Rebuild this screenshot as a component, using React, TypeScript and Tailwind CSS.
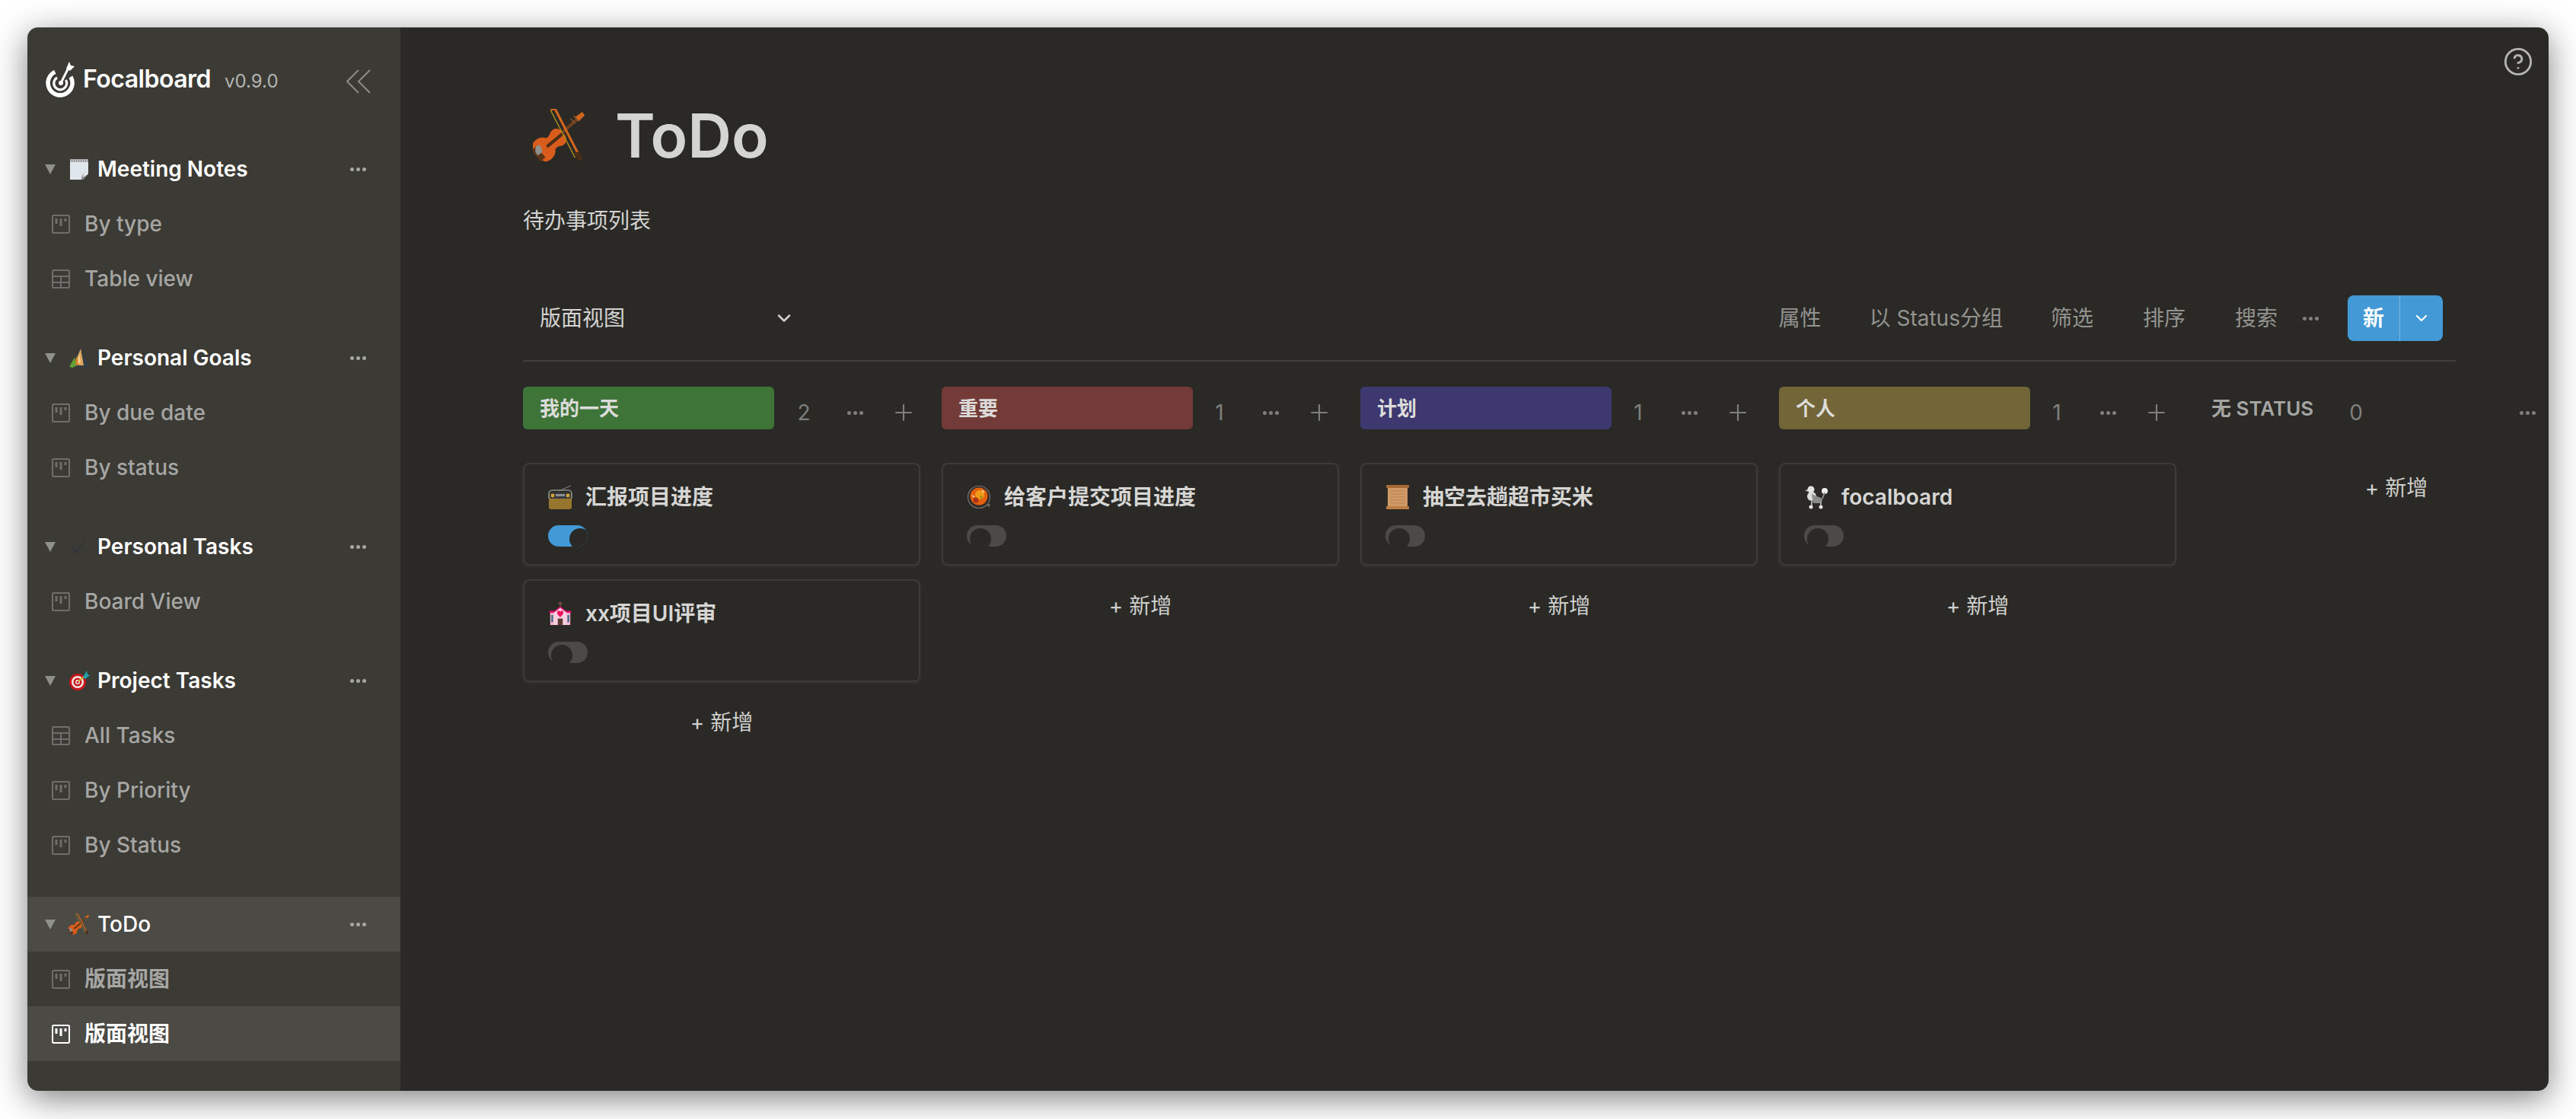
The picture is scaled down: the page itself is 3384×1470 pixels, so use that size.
import React from 'react'
import { ChevronDown, CircleHelp, Plus } from 'lucide-react'

const FONT = 'font-[Inter,"Noto_Sans_CJK_SC",sans-serif]'

// --- emoji drawings (no colour emoji font in the sandbox) ---

const Violin = ({ size }: { size: number }) => (
    <svg width={size} height={size} viewBox="0 0 70 72">
        <path d="M25 44 L60 13" stroke="#6b4020" strokeWidth="4.5" />
        <path d="M56 11 L66 4 L69 9 L61 17Z" fill="#d2651f" />
        <path d="M50 13 L56 20 M54 9 L60 16" stroke="#8a5528" strokeWidth="1.5" />
        <g transform="translate(23 47) rotate(50) scale(1.08)">
            <path d="M0 -21 C10 -21 13 -15 11 -9 C9 -6 8 -3 9 0 C15 3 17 12 14 18 C10 25 -10 25 -14 18 C-17 12 -15 3 -9 0 C-8 -3 -9 -6 -11 -9 C-13 -15 -10 -21 0 -21Z" fill="#d85c1c" />
            <path d="M-2 -21 H2 V6 H-2Z" fill="#4a2c17" />
            <path d="M-9 16 H9 V24 H-9Z" fill="#5a3418" />
        </g>
        <path d="M4 50 C1 54 2 60 6 63 L12 58 L9 49Z" fill="#8f8f8b" />
        <path d="M23 1 L29 0 L63 66" stroke="#d2651f" strokeWidth="3.2" fill="none" />
        <path d="M23 2 L56 66" stroke="#a88a1e" strokeWidth="1.5" fill="none" />
        <path d="M55 60 L62 57 L66 70 L60 70Z" fill="#4a2c17" />
    </svg>
)

const Notepad = ({ size }: { size: number }) => (
    <svg width={size} height={size} viewBox="0 0 28 28">
        <path d="M2 3 H26 V20 L19 28 H2Z" fill="#dfe7ec" />
        <rect x="2" y="1" width="24" height="4" fill="#8f9093" />
        <path d="M3 1 V5 M6 1 V5 M9 1 V5 M12 1 V5 M15 1 V5 M18 1 V5 M21 1 V5 M24 1 V5" stroke="#e8e8e8" strokeWidth="1" />
        <path d="M26 18 C22 18 17 21 17 28 H19 L26 21Z" fill="#85868a" />
        <path d="M25 18 C21 19 19 22 19 25 C21 23 24 22 26 20Z" fill="#f5f5f5" />
    </svg>
)

const Mountain = ({ size }: { size: number }) => (
    <svg width={size} height={size} viewBox="0 0 28 28">
        <path d="M16 2 L27 26 H2Z" fill="#2f3f4a" />
        <path d="M16 2 L20 24 H7Z" fill="#e0a45a" />
        <path d="M11 12 L14 24 H6Z" fill="#c9802e" />
        <path d="M1 26 L8 13 L10 25 L5 27Z" fill="#5fa033" />
        <path d="M14 8 L16 20 L12 22Z" fill="#f2d08e" />
    </svg>
)

const Check = ({ size }: { size: number }) => (
    <svg width={size} height={size} viewBox="0 0 28 28">
        <path d="M3 12 C5 17 8 21 11 24 C15 18 21 8 25 1 C20 8 14 15 11 19 C9 17 6 14 3 12Z" fill="#33343a" />
    </svg>
)

const Dart = ({ size }: { size: number }) => (
    <svg width={size} height={size} viewBox="0 0 28 28">
        <circle cx="12" cy="16" r="11" fill="#c9171e" />
        <circle cx="12" cy="16" r="8" fill="#f3e9e4" />
        <circle cx="12" cy="16" r="5.5" fill="#c9171e" />
        <circle cx="12" cy="16" r="3" fill="#f3e9e4" />
        <circle cx="12" cy="16" r="1.5" fill="#c9171e" />
        <path d="M13 15 L24 6" stroke="#d9a520" strokeWidth="2" />
        <path d="M19 10 L24 1 L25 6 L28 7 L22 12Z" fill="#1ea3a8" />
    </svg>
)

const Radio = ({ size }: { size: number }) => (
    <svg width={size} height={size} viewBox="0 0 32 32">
        <path d="M14 8 L30 1" stroke="#7a7a76" strokeWidth="1.2" />
        <rect x="1" y="10" width="30" height="22" rx="3" fill="#96752f" />
        <path d="M1 18 V11 C1 8 4 7 6 7 H26 C28 7 31 8 31 11 V18" fill="none" stroke="#8c8c88" strokeWidth="1.5" />
        <rect x="2" y="10" width="28" height="8" rx="2" fill="#37393d" />
        <circle cx="6" cy="14" r="2.4" fill="#d6a735" />
        <circle cx="26" cy="14" r="2.4" fill="#d6a735" />
        <rect x="10" y="12" width="12" height="3" fill="#8b8f94" />
    </svg>
)

const Curry = ({ size }: { size: number }) => (
    <svg width={size} height={size} viewBox="0 0 32 32">
        <path d="M26 26 L31 25 L29 29Z" fill="#77726c" />
        <circle cx="16" cy="16" r="14.5" fill="#2c2926" stroke="#77726c" strokeWidth="1.2" />
        <circle cx="16" cy="15" r="11.5" fill="#e3600c" />
        <circle cx="17" cy="13" r="6" fill="#f09b16" />
        <circle cx="12" cy="20" r="3.5" fill="#a8361a" />
        <path d="M20 7 L23 10 M7 14 L10 16" stroke="#f4e3b4" strokeWidth="1.5" />
        <path d="M18 14 L20 18" stroke="#5d8a2a" strokeWidth="1.2" />
    </svg>
)

const Church = ({ size }: { size: number }) => (
    <svg width={size} height={size} viewBox="0 0 32 34">
        <path d="M16 0 V8 M13 3 H19" stroke="#7c4f46" strokeWidth="1.6" />
        <path d="M1 13 H31 V17 H1Z" fill="#d8106a" />
        <rect x="2" y="16" width="28" height="17" fill="#f5b3d0" />
        <path d="M16 8 L25 15 V33 H7 V15Z" fill="#f8cfe0" />
        <path d="M16 7 L26 15 L25 16 L16 9 L7 16 L6 15Z" fill="#d8106a" />
        <path d="M16 22 C10 17 11 13 14 13 C15 13 16 14 16 15 C16 14 17 13 18 13 C21 13 22 17 16 22Z" fill="#f0115f" />
        <rect x="12.5" y="24" width="7" height="9" fill="#5d3a33" />
        <rect x="3.5" y="19" width="2.5" height="10" fill="#3b6f87" />
        <rect x="26" y="19" width="2.5" height="10" fill="#3b6f87" />
    </svg>
)

const Scroll = ({ size }: { size: number }) => (
    <svg width={size} height={size} viewBox="0 0 32 32">
        <rect x="3" y="2" width="26" height="28" fill="#d09a67" />
        <rect x="1" y="0" width="30" height="4" rx="1" fill="#a66a35" />
        <rect x="1" y="28" width="30" height="4" rx="1" fill="#bd7f45" />
        <path d="M6 8 H26 M6 12 H26 M6 16 H26 M6 20 H26 M6 24 H26" stroke="#b98353" strokeWidth="1" />
    </svg>
)

const Poodle = ({ size }: { size: number }) => (
    <svg width={size} height={size} viewBox="0 0 32 32">
        <circle cx="9" cy="6" r="4.5" fill="#e4e4e2" />
        <path d="M5 6 L1 7 L5 9Z" fill="#c0c0be" />
        <circle cx="10" cy="15" r="6" fill="#dcdcda" />
        <path d="M10 12 L24 18 L23 24 H12Z" fill="#8d8d8b" />
        <circle cx="27" cy="8" r="4" fill="#eeeeec" />
        <path d="M24 18 L27 10" stroke="#8d8d8b" strokeWidth="2" />
        <circle cx="9" cy="29" r="2.5" fill="#e4e4e2" />
        <circle cx="22" cy="29" r="2.5" fill="#e4e4e2" />
        <path d="M10 20 V27 M22 22 V27" stroke="#a5a5a3" strokeWidth="2" />
    </svg>
)

// --- small ui glyphs ---

const Logo = () => (
    <svg width="40" height="48" viewBox="0 0 40 48" fill="none" className="shrink-0">
        <path d="M12.3 14.5 A16 16 0 1 0 32.9 21" stroke="#fff" strokeWidth="5.5" />
        <path d="M4 34 A16 17 0 0 0 34 34" stroke="#fff" strokeWidth="5" />
        <path d="M15 22 A8.5 8.5 0 1 0 26.5 25" stroke="#fff" strokeWidth="3.2" />
        <circle cx="20" cy="29" r="3" fill="#fff" />
        <path d="M20 29 L31 7" stroke="#fff" strokeWidth="3" />
        <path d="M27 10 L31 1 L33 6 L38 7 L32 13Z" fill="#fff" />
    </svg>
)

const Triangle = () => (
    <svg width="14" height="13" viewBox="0 0 14 13" className="shrink-0">
        <path d="M0 0 H14 L7 13Z" fill="#8f8f8b" />
    </svg>
)

const BoardIcon = ({ active }: { active?: boolean }) => (
    <svg width="24" height="25" viewBox="0 0 24 25" fill="none" className={active ? 'shrink-0 text-white' : 'shrink-0 text-[#6f6e6a]'}>
        <rect x="1" y="1" width="22" height="23" rx="1.5" stroke="currentColor" strokeWidth="2" />
        <path d="M6 5 V12 M12 5 V15 M18 5 V9" stroke="currentColor" strokeWidth="3" />
    </svg>
)

const TableIcon = () => (
    <svg width="24" height="25" viewBox="0 0 24 25" fill="none" className="shrink-0 text-[#6f6e6a]">
        <rect x="1" y="1" width="22" height="23" rx="1.5" stroke="currentColor" strokeWidth="2" />
        <path d="M1 9 H23 M1 17 H23 M12 9 V24" stroke="currentColor" strokeWidth="2" />
    </svg>
)

const Dots = ({ className }: { className: string }) => (
    <span className={`flex items-center justify-center gap-[3px] ${className}`}>
        <i className="block h-[5px] w-[5px] rounded-full bg-current" />
        <i className="block h-[5px] w-[5px] rounded-full bg-current" />
        <i className="block h-[5px] w-[5px] rounded-full bg-current" />
    </span>
)

// --- sidebar ---

interface IBoardGroup {
    title: string
    emoji: React.ReactNode
    views: { label: string; table?: boolean; active?: boolean }[]
    current?: boolean
}

const groups: IBoardGroup[] = [
    { title: 'Meeting Notes', emoji: <Notepad size={28} />, views: [{ label: 'By type' }, { label: 'Table view', table: true }] },
    { title: 'Personal Goals', emoji: <Mountain size={28} />, views: [{ label: 'By due date' }, { label: 'By status' }] },
    { title: 'Personal Tasks', emoji: <Check size={28} />, views: [{ label: 'Board View' }] },
    { title: 'Project Tasks', emoji: <Dart size={28} />, views: [{ label: 'All Tasks', table: true }, { label: 'By Priority' }, { label: 'By Status' }] },
    { title: 'ToDo', emoji: <Violin size={28} />, current: true, views: [{ label: '版面视图' }, { label: '版面视图', active: true }] },
]

const Sidebar = () => (
    <div className="flex w-[490px] shrink-0 flex-col bg-[#3b3a35]">
        <div className="flex h-[150px] items-center pb-[14px] pl-[24px]">
            <Logo />
            <span className="ml-[9px] text-[32px] font-semibold tracking-[-0.5px] text-white">Focalboard</span>
            <span className="ml-[18px] mt-[6px] text-[24px] text-[#b4b4b1]">v0.9.0</span>
            <svg width="32" height="32" viewBox="0 0 32 32" fill="none" className="ml-[89px] mt-[6px] shrink-0">
                <path d="M16 1 L1 16 L16 31 M31 1 L16 16 L31 31" stroke="#8d8c88" strokeWidth="2" />
            </svg>
        </div>
        {groups.map((group) => (
            <div key={group.title} className="mb-[32px]">
                <div className={`flex h-[72px] items-center pl-[23px] ${group.current ? 'bg-[#4b4a45]' : ''}`}>
                    <Triangle />
                    <span className="ml-[17px] w-[28px] shrink-0">{group.emoji}</span>
                    <span className={`ml-[10px] flex-1 text-[28px] text-white ${group.current ? 'font-medium' : 'font-semibold'}`}>{group.title}</span>
                    <Dots className="mr-[45px] text-[#a6a6a2]" />
                </div>
                {group.views.map((view, index) => (
                    <div key={index} className={`flex h-[72px] items-center pl-[32px] ${view.active ? 'bg-[#4b4a45]' : ''}`}>
                        {view.table ? <TableIcon /> : <BoardIcon active={view.active} />}
                        <span className={`ml-[19px] text-[28px] ${group.current ? 'font-semibold' : 'font-medium'} ${view.active ? 'text-white' : 'text-[#a6a6a3]'}`}>{view.label}</span>
                    </div>
                ))}
            </div>
        ))}
    </div>
)

// --- board ---

const Toggle = ({ on }: { on?: boolean }) => (
    <div className={`relative mt-[20px] h-[28px] w-[52px] overflow-hidden rounded-[14px] ${on ? 'bg-[#4299d6]' : 'bg-[#4b4a46]'}`}>
        <div className={`absolute top-[4px] h-[28px] w-[28px] rounded-full bg-[#2a2926] ${on ? 'left-[28px]' : 'left-[4px]'}`} />
    </div>
)

const Card = ({ title, emoji, on }: { title: string; emoji: React.ReactNode; on?: boolean }) => (
    <div className="h-[135px] w-[522px] rounded-[8px] border-2 border-[#3c3b38] px-[31px] pt-[26px] shadow-[0_2px_4px_rgba(255,255,255,0.05)]">
        <div className="flex h-[34px] items-center">
            <span className="w-[32px] shrink-0">{emoji}</span>
            <span className="ml-[17px] text-[28px] font-semibold text-[#d6d6d4]">{title}</span>
        </div>
        <Toggle on={on} />
    </div>
)

const AddNew = ({ spaced }: { spaced?: boolean }) => (
    <div className={`flex h-[66px] w-[522px] items-center justify-center text-[28px] text-[#cfcfcd] ${spaced ? 'mt-[2px]' : ''}`}>+ 新增</div>
)

const columns = [
    {
        label: '我的一天',
        color: 'bg-[#3f7439]',
        countGap: 'ml-[25px]',
        cards: [
            { title: '汇报项目进度', emoji: <Radio size={32} />, on: true },
            { title: 'xx项目UI评审', emoji: <Church size={32} /> },
        ],
    },
    { label: '重要', color: 'bg-[#733b38]', countGap: 'ml-[21px]', cards: [{ title: '给客户提交项目进度', emoji: <Curry size={32} /> }] },
    { label: '计划', color: 'bg-[#3d386f]', countGap: 'ml-[21px]', cards: [{ title: '抽空去趟超市买米', emoji: <Scroll size={32} /> }] },
    { label: '个人', color: 'bg-[#726538]', countGap: 'ml-[21px]', cards: [{ title: 'focalboard', emoji: <Poodle size={32} /> }] },
]

const Board = () => (
    <div className="mt-[33px] flex gap-[28px]">
        {columns.map((col) => (
            <div key={col.label} className="w-[522px] shrink-0">
                <div className="flex h-[56px] items-start">
                    <div className={`flex h-[56px] w-[330px] shrink-0 items-center rounded-[6px] pl-[22px] text-[26px] font-semibold text-[#dcdcda] ${col.color}`}>{col.label}</div>
                    <div className={`flex h-[68px] items-center text-[#7f7f7b] ${col.countGap}`}>
                        <span className="w-[28px] text-center text-[28px]">{col.cards.length}</span>
                        <Dots className="ml-[33px] w-[40px]" />
                        <Plus size={34} strokeWidth={1.5} className="ml-[27px] shrink-0" />
                    </div>
                </div>
                <div className="mt-[44px] flex flex-col gap-[18px]">
                    {col.cards.map((card) => (
                        <Card key={card.title} title={card.title} emoji={card.emoji} on={card.on} />
                    ))}
                    <AddNew spaced />
                </div>
            </div>
        ))}
        <div className="w-[522px] shrink-0">
            <div className="flex h-[56px] items-start">
                <span className="ml-[18px] flex h-[56px] w-[135px] shrink-0 items-center text-[26px] font-semibold whitespace-nowrap text-[#a5a5a2]">无 STATUS</span>
                <div className="flex h-[68px] items-center text-[#7f7f7b]">
                    <span className="ml-[41px] w-[28px] text-center text-[28px]">0</span>
                    <Dots className="ml-[191px] w-[40px]" />
                </div>
            </div>
            <div className="mt-[44px]">
                <AddNew />
            </div>
        </div>
    </div>
)

const Toolbar = () => (
    <div className="mt-[78px] flex h-[60px] w-[2539px] items-center">
        <div className="flex items-center pl-[22px] text-[28px] whitespace-nowrap text-[#d3d3d1]">
            <span>版面视图</span>
            <ChevronDown size={28} strokeWidth={2.2} className="ml-[195px] shrink-0 text-[#cfcfcd]" />
        </div>
        <div className="ml-auto flex items-center pr-[17px] text-[28px] whitespace-nowrap text-[#93938f]">
            <span>属性</span>
            <span className="ml-[63px]">以 Status分组</span>
            <span className="ml-[63px]">筛选</span>
            <span className="ml-[65px]">排序</span>
            <span className="ml-[65px]">搜索</span>
            <Dots className="ml-[33px] text-[#7f7f7b]" />
            <div className="ml-[38px] flex h-[60px] w-[125px] overflow-hidden rounded-[8px] bg-[#4299d6] text-white">
                <span className="flex w-[69px] items-center justify-center border-r border-white/30 font-semibold">新</span>
                <span className="flex flex-1 items-center justify-center">
                    <ChevronDown size={24} strokeWidth={2.2} />
                </span>
            </div>
        </div>
    </div>
)

const Main = () => (
    <div className="relative min-w-0 flex-1 overflow-hidden bg-[#2a2926] pl-[161px]">
        <CircleHelp size={40} strokeWidth={1.7} className="absolute top-[25px] right-[20px] text-[#b5b5b2]" />
        <div className="mt-[97px] flex h-[90px] items-center">
            <span className="ml-[13px] w-[70px] shrink-0">
                <Violin size={70} />
            </span>
            <span className="ml-[38px] text-[80px] font-semibold text-[#d4d4d2]">ToDo</span>
        </div>
        <p className="mt-[47px] text-[28px] leading-[40px] text-[#d3d3d1]">待办事项列表</p>
        <Toolbar />
        <div className="mt-[25px] h-[2px] w-[2539px] bg-[#3f3e3b]" />
        <Board />
    </div>
)

export default function App() {
    return (
        <div className={`h-[1470px] w-[3384px] overflow-hidden bg-white pt-[36px] pl-[36px] ${FONT}`}>
            <div className="flex h-[1397px] w-[3312px] overflow-hidden rounded-[14px] shadow-[0_10px_44px_rgba(0,0,0,0.5)]">
                <Sidebar />
                <Main />
            </div>
        </div>
    )
}
